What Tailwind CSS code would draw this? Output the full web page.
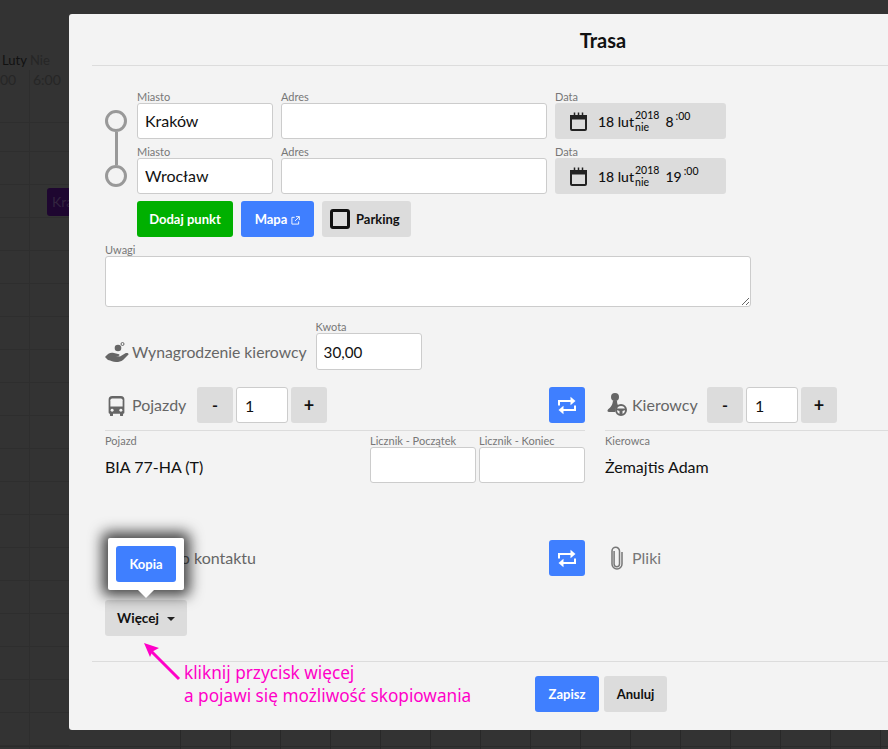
<!DOCTYPE html>
<html lang="pl">
<head>
<meta charset="UTF-8">
<title>Trasa</title>
<script src="https://cdn.jsdelivr.net/npm/@tailwindcss/browser@4"></script>
</head>
<body class="font-['Lato',sans-serif] overflow-hidden">
<div class="relative w-[888px] h-[749px] overflow-hidden bg-[#333333]">

  <!-- calendar behind the overlay -->
  <div class="absolute left-[2px] top-[52px] text-[13px] leading-[17px] text-[#111]">Luty <span class="text-[#262626]">Nie</span></div>
  <div class="absolute left-[33px] top-[71px] text-[14px] leading-[17px] text-[#262626]">6:00</div>
  <div class="absolute left-0 top-[71px] text-[14px] leading-[17px] text-[#262626]">00</div>
  <div class="absolute left-0 top-[90px] w-[69px] flex flex-col">
    <div class="h-[33px] border-b border-[#2e2e2e]"></div>
    <div class="h-[29px] border-b border-[#2e2e2e]"></div>
    <div class="h-[33px] border-b border-[#2e2e2e]"></div>
    <div class="h-[33px] border-b border-[#2e2e2e]"></div>
    <div class="h-[33px] border-b border-[#2e2e2e]"></div>
    <div class="h-[33px] border-b border-[#2e2e2e]"></div>
    <div class="h-[33px] border-b border-[#2e2e2e]"></div>
    <div class="h-[33px] border-b border-[#2e2e2e]"></div>
    <div class="h-[33px] border-b border-[#2e2e2e]"></div>
    <div class="h-[33px] border-b border-[#2e2e2e]"></div>
    <div class="h-[33px] border-b border-[#2e2e2e]"></div>
    <div class="h-[33px] border-b border-[#2e2e2e]"></div>
    <div class="h-[33px] border-b border-[#2e2e2e]"></div>
    <div class="h-[33px] border-b border-[#2e2e2e]"></div>
    <div class="h-[33px] border-b border-[#2e2e2e]"></div>
    <div class="h-[33px] border-b border-[#2e2e2e]"></div>
    <div class="h-[33px] border-b border-[#2e2e2e]"></div>
    <div class="h-[33px] border-b border-[#2e2e2e]"></div>
    <div class="h-[33px] border-b border-[#2e2e2e]"></div>
    <div class="h-[33px] border-b border-[#2e2e2e]"></div>
  </div>
  <div class="absolute left-[29px] top-[70px] w-px h-[679px] bg-[#2e2e2e]"></div>
  <div class="absolute left-[47px] top-[188px] w-[30px] h-[28px] rounded-[3px] bg-[#1e0630] pl-[5px] text-[14px] leading-[28px] text-[#33243f]">Kra</div>
  <div class="absolute left-0 top-[746px] w-[888px] h-px bg-[#2b2b2b]"></div>
  <div class="absolute left-[180px] top-[730px] h-[19px] flex gap-[49px]">
    <i class="w-px bg-[#282828]"></i><i class="w-px bg-[#282828]"></i><i class="w-px bg-[#282828]"></i><i class="w-px bg-[#282828]"></i><i class="w-px bg-[#282828]"></i><i class="w-px bg-[#282828]"></i><i class="w-px bg-[#282828]"></i><i class="w-px bg-[#282828]"></i><i class="w-px bg-[#282828]"></i><i class="w-px bg-[#282828]"></i><i class="w-px bg-[#282828]"></i><i class="w-px bg-[#282828]"></i><i class="w-px bg-[#282828]"></i><i class="w-px bg-[#282828]"></i><i class="w-px bg-[#282828]"></i>
  </div>

  <!-- modal -->
  <div class="absolute left-[69px] top-[14px] w-[1068px] h-[716px] rounded-[3px] bg-[#f3f3f3]">
    <div class="ml-[23px] h-[52px] border-b border-[#dcdcdc] flex items-center justify-center pr-[23px]">
      <h1 class="text-[20px] font-bold text-[#111]">Trasa</h1>
    </div>

    <div class="pl-[36px] pt-[24px]">
      <!-- route -->
      <div class="flex">
        <div class="w-[32px] pt-[20px] flex flex-col items-center pr-[10px] shrink-0">
          <span class="w-[22px] h-[22px] rounded-full border-[3px] border-[#999]"></span>
          <span class="w-[3px] h-[33px] bg-[#999]"></span>
          <span class="w-[22px] h-[22px] rounded-full border-[3px] border-[#999]"></span>
        </div>
        <div class="flex flex-col gap-[1px]">
          <div class="flex gap-[8px]">
            <label class="block w-[136px]">
              <span class="block text-[11px] leading-[13px] text-[#777] h-[13px]">Miasto</span>
              <input value="Kraków" class="w-full h-[36px] px-[7px] pb-[2px] bg-white border border-[#ccc] rounded-[3px] text-[16px] text-[#111]">
            </label>
            <label class="block w-[266px]">
              <span class="block text-[11px] leading-[13px] text-[#777] h-[13px]">Adres</span>
              <input class="w-full h-[36px] px-[7px] bg-white border border-[#ccc] rounded-[3px] text-[16px]">
            </label>
            <div class="w-[171px]">
              <span class="block text-[11px] leading-[13px] text-[#777] h-[13px]">Data</span>
              <div class="h-[36px] bg-[#dcdcdc] rounded-[3px] flex items-center pl-[15px] text-[#111]">
                <svg viewBox="0 0 17 19" class="w-[17px] h-[19px] shrink-0" fill="none"><path d="M1 4h15v13a1 1 0 0 1-1 1H2a1 1 0 0 1-1-1z" stroke="#222" stroke-width="2"/><path d="M1 3h15v4.500H1z" fill="#222"/><path d="M4.500 .5v3M8.500 .5v3M12.500 .5v3" stroke="#222" stroke-width="1.500"/></svg>
                <span class="ml-[11px] text-[14px] font-medium">18 lut</span>
                <span class="ml-[1px] flex flex-col text-[10.500px] leading-[12px] font-medium"><span>2018</span><span>nie</span></span>
                <span class="ml-[6px] text-[14px] font-medium">8</span>
                <span class="ml-[2px] -mt-[8px] text-[10.500px] font-medium">:00</span>
              </div>
            </div>
          </div>
          <div class="flex gap-[8px] mt-[5px]">
            <label class="block w-[136px]">
              <span class="block text-[11px] leading-[13px] text-[#777] h-[13px]">Miasto</span>
              <input value="Wrocław" class="w-full h-[36px] px-[7px] pb-[2px] bg-white border border-[#ccc] rounded-[3px] text-[16px] text-[#111]">
            </label>
            <label class="block w-[266px]">
              <span class="block text-[11px] leading-[13px] text-[#777] h-[13px]">Adres</span>
              <input class="w-full h-[36px] px-[7px] bg-white border border-[#ccc] rounded-[3px] text-[16px]">
            </label>
            <div class="w-[171px]">
              <span class="block text-[11px] leading-[13px] text-[#777] h-[13px]">Data</span>
              <div class="h-[36px] bg-[#dcdcdc] rounded-[3px] flex items-center pl-[15px] text-[#111]">
                <svg viewBox="0 0 17 19" class="w-[17px] h-[19px] shrink-0" fill="none"><path d="M1 4h15v13a1 1 0 0 1-1 1H2a1 1 0 0 1-1-1z" stroke="#222" stroke-width="2"/><path d="M1 3h15v4.500H1z" fill="#222"/><path d="M4.500 .5v3M8.500 .5v3M12.500 .5v3" stroke="#222" stroke-width="1.500"/></svg>
                <span class="ml-[11px] text-[14px] font-medium">18 lut</span>
                <span class="ml-[1px] flex flex-col text-[10.500px] leading-[12px] font-medium"><span>2018</span><span>nie</span></span>
                <span class="ml-[6px] text-[14px] font-medium">19</span>
                <span class="ml-[2px] -mt-[8px] text-[10.500px] font-medium">:00</span>
              </div>
            </div>
          </div>
          <div class="flex gap-[8px] mt-[6px]">
            <button class="w-[96px] h-[36px] pt-[1px] rounded-[3px] bg-[#00b000] text-white text-[13px] font-bold">Dodaj punkt</button>
            <button class="w-[73px] h-[36px] pt-[2px] rounded-[3px] bg-[#3f7fff] text-white text-[13px] font-bold flex items-center justify-center gap-[4px]">Mapa
              <svg viewBox="0 0 10 10" class="w-[9px] h-[9px]" fill="none" stroke="white" stroke-width="1"><path d="M4 1.500H1v7.500h7.500V6M5.500 .7h3.800v3.800M9.200 .8L4.500 5.500"/></svg>
            </button>
            <button class="w-[89px] h-[36px] rounded-[3px] bg-[#dcdcdc] text-[#111] text-[13px] font-bold flex items-center pl-[8px] gap-[6px]">
              <span class="w-[20px] h-[20px] border-[3px] border-[#111] rounded-[3px]"></span><span class="pt-[1px]">Parking</span>
            </button>
          </div>
        </div>
      </div>

      <!-- notes -->
      <div class="mt-[6px] w-[646px]">
        <span class="block text-[11px] leading-[13px] text-[#777] h-[13px]">Uwagi</span>
        <textarea class="block w-full h-[51px] bg-white border border-[#ccc] rounded-[3px]"></textarea>
      </div>

      <!-- driver pay -->
      <div class="mt-[13px] flex items-end">
        <svg viewBox="0 0 24 20" class="w-[24px] h-[20px] mb-[8px] shrink-0" fill="#666"><circle cx="13" cy="6" r="3.300"/><circle cx="17.500" cy="2" r="1.500" fill="none" stroke="#666"/><path d="M0 15C3 11 6 10 9 11l4 1c2 0 2 2 0 2h-2l4 .5 5-3c2-1 4 0 3.500 1L18 18c-2 1.500-4 2-7 2-3 0-5-1.500-8-2z"/></svg>
        <span class="ml-[3px] mb-[9px] text-[15.750px] leading-[19px] text-[#666]">Wynagrodzenie kierowcy</span>
        <label class="block ml-[9px] w-[106px]">
          <span class="block text-[11px] leading-[13px] text-[#777] h-[13px]">Kwota</span>
          <input value="30,00" class="w-full h-[37px] px-[7px] bg-white border border-[#ccc] rounded-[3px] text-[15.200px] text-[#111]">
        </label>
      </div>

      <!-- vehicles and drivers -->
      <div class="mt-[17px] flex">
        <div class="w-[480px]">
          <div class="flex items-center h-[36px] border-0">
            <svg viewBox="0 0 20 24" class="w-[19px] h-[21px] ml-[2px] shrink-0" fill="#666"><path d="M5 1h10a4 4 0 0 1 4 4v15a1.500 1.500 0 0 1-1.500 1.500V23a1 1 0 0 1-1 1h-1.500a1 1 0 0 1-1-1v-1.500H6V23a1 1 0 0 1-1 1H3.500a1 1 0 0 1-1-1v-1.500A1.500 1.500 0 0 1 1 20V5a4 4 0 0 1 4-4z"/><path d="M5 4h10a2 2 0 0 1 2 2v7H3V6a2 2 0 0 1 2-2z" fill="#f3f3f3"/><circle cx="5" cy="17.500" r="1.700" fill="#f3f3f3"/><circle cx="15" cy="17.500" r="1.700" fill="#f3f3f3"/></svg>
            <span class="ml-[6px] w-[65px] text-[16px] text-[#666]">Pojazdy</span>
            <button class="w-[36px] h-[36px] rounded-[3px] bg-[#dcdcdc] text-[#111] text-[16px] font-bold">-</button>
            <input value="1" class="ml-[3px] w-[52px] h-[36px] px-[8px] bg-white border border-[#ccc] rounded-[3px] text-[16px] text-[#111]">
            <button class="ml-[3px] w-[36px] h-[36px] rounded-[3px] bg-[#dcdcdc] text-[#111] text-[18px] font-bold">+</button>
            <button class="ml-auto w-[36px] h-[36px] rounded-[3px] bg-[#3f7fff] flex items-center justify-center">
              <svg viewBox="0 0 18 19" class="w-[18px] h-[19px]" fill="white"><path d="M1 9.500V5h12" fill="none" stroke="white" stroke-width="2"/><path d="M12.500 .8L17.500 5l-5 4.200z"/><path d="M17 9.500V14H5" fill="none" stroke="white" stroke-width="2"/><path d="M5.500 9.800L.5 14l5 4.200z"/></svg>
            </button>
          </div>
          <div class="mt-[7px] border-t border-[#dcdcdc] pt-[3px] flex">
            <div class="w-[265px]">
              <span class="block text-[11px] leading-[13px] text-[#777] h-[13px]">Pojazd</span>
              <div class="h-[36px] pt-[3px] flex items-center text-[16px] text-[#111]">BIA 77-HA (T)</div>
            </div>
            <label class="block w-[106px]">
              <span class="block text-[11px] leading-[13px] text-[#777] h-[13px]">Licznik - Początek</span>
              <input class="w-full h-[36px] bg-white border border-[#ccc] rounded-[3px]">
            </label>
            <label class="block ml-[3px] w-[106px]">
              <span class="block text-[11px] leading-[13px] text-[#777] h-[13px]">Licznik - Koniec</span>
              <input class="w-full h-[36px] bg-white border border-[#ccc] rounded-[3px]">
            </label>
          </div>
        </div>
        <div class="ml-[20px] flex-1">
          <div class="flex items-center h-[36px]">
            <svg viewBox="0 0 20 24" class="w-[20px] h-[24px] ml-[2px] shrink-0" fill="#666"><circle cx="8" cy="4" r="4"/><path d="M6 7.500h4c0 3 .5 4.500 2 5.500-3 1-4 3-4 6H2c-1.500 0-2-1.500-1-2.500C4 14 5.500 12 6 7.500z"/><circle cx="14" cy="17" r="5" fill="#f3f3f3" stroke="#666" stroke-width="2"/><path d="M9.500 15.500h9v1.500l-3 1v3.500h-3V18l-3-1z"/></svg>
            <span class="ml-[5px] w-[75px] text-[16px] text-[#666]">Kierowcy</span>
            <button class="w-[36px] h-[36px] rounded-[3px] bg-[#dcdcdc] text-[#111] text-[16px] font-bold">-</button>
            <input value="1" class="ml-[3px] w-[52px] h-[36px] px-[8px] bg-white border border-[#ccc] rounded-[3px] text-[16px] text-[#111]">
            <button class="ml-[3px] w-[36px] h-[36px] rounded-[3px] bg-[#dcdcdc] text-[#111] text-[18px] font-bold">+</button>
          </div>
          <div class="mt-[7px] border-t border-[#dcdcdc] pt-[3px]">
            <span class="block text-[11px] leading-[13px] text-[#777] h-[13px]">Kierowca</span>
            <div class="h-[36px] pt-[3px] flex items-center text-[16px] text-[#111]">Żemajtis Adam</div>
          </div>
        </div>
      </div>

      <!-- contact and files -->
      <div class="mt-[57px] flex h-[36px] relative">
        <div class="w-[480px] flex items-center justify-end">
          <span class="mr-[293px] text-[16px] text-[#666]">Osoba do kontaktu</span>
          <button class="w-[36px] h-[36px] rounded-[3px] bg-[#3f7fff] flex items-center justify-center">
            <svg viewBox="0 0 18 19" class="w-[18px] h-[19px]" fill="white"><path d="M1 9.500V5h12" fill="none" stroke="white" stroke-width="2"/><path d="M12.500 .8L17.500 5l-5 4.200z"/><path d="M17 9.500V14H5" fill="none" stroke="white" stroke-width="2"/><path d="M5.500 9.800L.5 14l5 4.200z"/></svg>
          </button>
        </div>
        <div class="ml-[20px] flex items-center">
          <svg viewBox="0 0 12 24" class="w-[12px] h-[24px] ml-[6px]" fill="none" stroke="#777" stroke-width="1.500"><path d="M8.500 6v12a2.700 2.700 0 0 1-5.400 0V5"/><path d="M11 6v12a5 5 0 0 1-10 0V5a3.500 3.500 0 0 1 7.500 0v1"/></svg>
          <span class="ml-[9px] text-[16px] text-[#777]">Pliki</span>
        </div>
        <!-- popover -->
        <div class="absolute left-[3px] -top-[2px] w-[76px] h-[52px] bg-white rounded-[2px] shadow-[0_0_14px_6px_rgba(0,0,0,0.72)] p-[8px]">
          <button class="w-[60px] h-[36px] pt-[1px] rounded-[3px] bg-[#3f7fff] text-white text-[13px] font-bold">Kopia</button>
          <span class="absolute left-[30px] top-[52px] w-0 h-0 border-x-[8px] border-x-transparent border-t-[8px] border-t-white"></span>
        </div>
      </div>

      <button class="mt-[24px] w-[82px] h-[36px] pt-[1px] rounded-[3px] bg-[#dcdcdc] text-[#111] text-[13.500px] font-bold flex items-center justify-center gap-[8px]">Więcej
        <span class="w-0 h-0 mt-[1px] border-x-[4px] border-x-transparent border-t-[4px] border-t-[#222]"></span>
      </button>
    </div>

    <!-- footer -->
    <div class="ml-[23px] mt-[25px] border-t border-[#dcdcdc] pt-[14px] flex">
      <div class="ml-[92px] w-[351px] -mt-[15px] text-[17.200px] leading-[23px] text-[#ff00c8] font-['Noto_Sans',sans-serif]">
        <p>kliknij przycisk więcej</p>
        <p>a pojawi się możliwość skopiowania</p>
      </div>
      <button class="w-[64px] h-[36px] pt-[1px] rounded-[3px] bg-[#3f7fff] text-white text-[13px] font-bold">Zapisz</button>
      <button class="ml-[5px] w-[63px] h-[36px] pt-[1px] rounded-[3px] bg-[#dcdcdc] text-[#111] text-[13px] font-bold">Anuluj</button>
    </div>

    <!-- annotation arrow -->
    <svg class="absolute left-[72px] top-[626px] w-[44px] h-[44px]" viewBox="0 0 44 44" fill="#ff00c8"><path d="M38 39L9 10" stroke="#ff00c8" stroke-width="3"/><path d="M3 3L18 8 11.500 11.500 9 17z"/></svg>
  </div>
</div>
</body>
</html>
